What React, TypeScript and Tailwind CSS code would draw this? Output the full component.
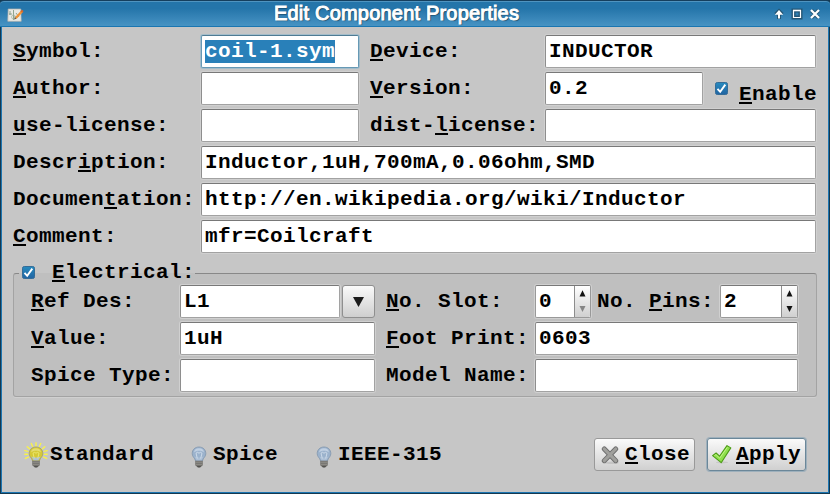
import React from "react";

/* Label with one underlined accelerator letter, marked by a leading "&". */
function Mnemonic({ text }: { text: string }) {
  const i = text.indexOf("&");
  if (i < 0) return <>{text}</>;
  return (
    <>
      {text.slice(0, i)}
      <span className="underline decoration-2 underline-offset-[2px] [text-decoration-skip-ink:none]">{text[i + 1]}</span>
      {text.slice(i + 2)}
    </>
  );
}

function Label({ text, className = "" }: { text: string; className?: string }) {
  return (
    <label className={`flex h-[33px] shrink-0 items-center whitespace-pre ${className}`}>
      <span>
        <Mnemonic text={text} />
      </span>
    </label>
  );
}

function Field({ value = "", selected = false, className = "" }: { value?: string; selected?: boolean; className?: string }) {
  const frame = selected
    ? "border-[#6699b5] border-t-[#4f7b93] shadow-[0_0_0_1px_#a3bdcb]"
    : "border-[#a2a2a2] border-t-[#787878] border-l-[#8e8e8e] shadow-[0_0_0_1px_#d0d0d0]";
  return (
    <div className={`flex h-[33px] shrink-0 items-center rounded-[2px] border bg-white pl-[3px] ${frame} ${className}`}>
      {value && <span className={selected ? "flex h-[23px] items-center bg-[#2980b9] text-white" : ""}>{value}</span>}
    </div>
  );
}

function Check() {
  return (
    <svg viewBox="0 0 13 13" className="h-[13px] w-[13px] shrink-0">
      <defs>
        <linearGradient id="checkFill" x1="0" y1="0" x2="0" y2="1">
          <stop offset="0" stopColor="#278bbf" />
          <stop offset="1" stopColor="#2164a2" />
        </linearGradient>
      </defs>
      <rect x=".5" y=".5" width="12" height="12" rx="1.8" fill="url(#checkFill)" stroke="#346c97" />
      <path d="M2.5 6.8 5.2 9.8 10.3 2.6" fill="none" stroke="#fff" strokeWidth="1.9" />
    </svg>
  );
}

function Spin({ value, className, disabledDown = false }: { value: string; className: string; disabledDown?: boolean }) {
  return (
    <div className={`flex h-[33px] shrink-0 overflow-hidden rounded-[2px] border border-[#999] border-t-[#787878] bg-white shadow-[0_0_0_1px_#d0d0d0] ${className}`}>
      <span className="flex flex-1 items-center pl-[3px]">{value}</span>
      <span className="w-[16px] border-l border-[#8d8d8d] bg-linear-to-b from-white to-[#d0d0d0]">
        <svg viewBox="0 0 15 31" className="h-[31px] w-[15px]">
          <path d="M7.5 4.2 10.5 10.5h-6z" fill="#111" />
          <path d="M7.5 26 10.5 20h-6z" fill={disabledDown ? "#858585" : "#111"} />
        </svg>
      </span>
    </div>
  );
}

function Bulb({ lit = false }: { lit?: boolean }) {
  return (
    <svg viewBox="0 0 24 26" className="h-[26px] w-[24px] shrink-0">
      {lit && (
        <g stroke="#f8f348" strokeWidth="1.4" strokeLinecap="round">
          <path d="M12 .7v3M7.3 1.5l1.2 2.8M16.7 1.5l-1.2 2.8M3.2 4.7l2.3 2M20.8 4.7l-2.3 2M.8 8.6l3 .8M23.2 8.6l-3 .8M.8 12.3h3M23.2 12.3h-3M1.4 16.4l3-1.3M22.6 16.4l-3-1.3" />
        </g>
      )}
      <path d="M12 5c-4 0-6.8 2.8-6.8 6.5 0 2.7 1.6 3.8 2.5 5.3.5.9.6 1.7.9 2.2h6.8c.3-.5.4-1.3.9-2.2.9-1.5 2.5-2.6 2.5-5.3C18.8 7.8 16 5 12 5Z" fill={lit ? "#d6c935" : "#9bb2cc"} stroke={lit ? "#a0a06a" : "#8095ad"} strokeWidth=".8" />
      <path d="M7.4 14.6c1 2 1.7 2.2 2 4h5.2c.3-1.8 1-2 2-4-2.5 1.3-6.7 1.3-9.2 0Z" fill="#adc0d6" />
      <path d="M7 10.5C7.4 7.6 9 6.3 12 6.3s4.6 1.3 5 4.2c-2-2.2-8-2.2-10 0Z" fill={lit ? "#e4dc70" : "#c0d0e2"} />
      <path d="M10.3 16.5 9 11.2q1.5-1.8 3 0 1.5-1.8 3 0l-1.3 5.3" fill="none" stroke={lit ? "#f0ef7c" : "#d9e4f0"} strokeWidth=".8" />
      <path d="M8.2 18.8h7.6v4.4L13.8 25h-3.6l-2-1.8Z" fill="#73726e" />
      <path d="M8.6 20.2h6.8M8.6 22.3h6.8" stroke="#a09f9a" strokeWidth=".7" />
      <path d="M10 24.3h4l-.8 1.2h-2.4Z" fill="#494946" />
    </svg>
  );
}

function TitleBar() {
  return (
    <header className="flex h-[27px] items-center rounded-t-[4px] border-t border-b border-t-[#153f5e] border-b-[#1a76b1] bg-linear-to-b from-[#2475aa] from-30% to-[#4793c3] shadow-[inset_0_1px_0_#4f94c0]">
      <svg viewBox="0 0 17 15" className="ml-[7px] mt-[3px] h-[15px] w-[17px] shrink-0">
        <path d="M1.2 1h12.6l.4 12.3H.8z" fill="#e9e9e4" stroke="#b8b5ad" strokeWidth=".7" />
        <path d="M6.5 2v10M2 6h3M7 9h4M3 3v4M9 5l3 4" stroke="#789378" strokeWidth=".8" fill="none" />
        <circle cx="6.5" cy="9" r="2" fill="none" stroke="#a5b5a1" strokeWidth=".7" />
        <path d="m8 9.2 6.2-6.7 1.8 1.4-6.4 6.8Z" fill="#f29334" />
        <path d="m13.4 3.4 1.4-1.6 1.8 1.2-1.4 1.7Z" fill="#d8672c" />
        <path d="m8 9.2-1 2.4 2.6-.9Z" fill="#705b3e" />
      </svg>
      <h1 className="flex-1 pb-px pl-[250px] font-['Liberation_Sans',sans-serif] text-[20px] font-normal leading-[24px] text-white [-webkit-text-stroke:1px_white] [text-shadow:1px_1px_1px_#123d59,-1px_0_1px_#245b7d]">
        <span className="whitespace-nowrap tracking-[0.2px]">Edit Component Properties</span>
      </h1>
      <svg viewBox="0 0 50 14" className="mr-[8px] h-[14px] w-[50px] shrink-0" fill="none">
        <g stroke="#245675" strokeWidth="4">
          <path d="M7 12V5M3.8 7.5 7 4.3l3.2 3.2M21.5 3.5h7v7h-7zM39.5 3.5l7 7M46.5 3.5l-7 7" />
        </g>
        <path d="M7 11.5V5" stroke="#fff" strokeWidth="2" />
        <path d="M2.8 7.8 7 3l4.2 4.8Z" fill="#fff" />
        <path d="M21.5 3.5h7v7h-7z" stroke="#fff" strokeWidth="1.2" />
        <path d="M21 3.5h8" stroke="#fff" strokeWidth="1.6" />
        <path d="m39 3 8 8M47 3l-8 8" stroke="#fff" strokeWidth="2.2" />
      </svg>
    </header>
  );
}

export default function App() {
  return (
    <div className="h-[494px] w-[830px] overflow-hidden bg-[#15394f] font-['Liberation_Mono',monospace] text-[21px] font-bold leading-[24px] tracking-[0.398px] text-black">
      <div className="flex h-full flex-col">
        <TitleBar />
        <main className="mx-px mb-px flex flex-1 flex-col border-x border-b border-[#1c75b1] bg-[#c6c6c6] pl-[11px] pt-[8px]">
          <section className="flex flex-col gap-[4px]">
            <div className="flex">
              <Label text="&Symbol:" className="w-[188px]" />
              <Field value="coil-1.sym" selected className="w-[158px]" />
              <Label text="&Device:" className="ml-[11px] w-[175px]" />
              <Field value="INDUCTOR" className="w-[271px]" />
            </div>
            <div className="flex">
              <Label text="&Author:" className="w-[188px]" />
              <Field className="w-[158px]" />
              <Label text="&Version:" className="ml-[11px] w-[175px]" />
              <Field value="0.2" className="w-[158px]" />
              <div className="ml-[12px] flex h-[33px] items-center gap-[11px]">
                <Check />
                <Label text="&Enable" className="pt-[12px]" />
              </div>
            </div>
            <div className="flex">
              <Label text="&use-license:" className="w-[188px]" />
              <Field className="w-[158px]" />
              <Label text="dist-&license:" className="ml-[11px] w-[175px]" />
              <Field className="w-[271px]" />
            </div>
            <div className="flex">
              <Label text="Descr&iption:" className="w-[188px]" />
              <Field value="Inductor,1uH,700mA,0.06ohm,SMD" className="w-[615px]" />
            </div>
            <div className="flex">
              <Label text="Documen&tation:" className="w-[188px]" />
              <Field value="http://en.wikipedia.org/wiki/Inductor" className="w-[615px]" />
            </div>
            <div className="flex">
              <Label text="&Comment:" className="w-[188px]" />
              <Field value="mfr=Coilcraft" className="w-[615px]" />
            </div>
          </section>

          <section className="mt-[20px] h-[124px] w-[804px] rounded-[3px] border border-[#a3a3a3] border-t-[#888] bg-[#bfbfbf] pl-[17px] shadow-[0_1px_0_#d0d0d0]">
            <div className="-ml-[12px] -mt-[13px] flex h-[24px] w-[176px] items-center gap-[17px] bg-linear-to-b from-[#c6c6c6] from-50% to-[#bfbfbf] to-50% pl-[3px]">
              <span className="pb-[2px]">
                <Check />
              </span>
              <span className="whitespace-nowrap">
                <Mnemonic text="&Electrical:" />
              </span>
            </div>
            <div className="flex flex-col gap-[4px]">
              <div className="flex">
                <Label text="&Ref Des:" className="w-[149px]" />
                <Field value="L1" className="w-[160px]" />
                <button className="ml-[2px] flex h-[33px] w-[33px] items-center justify-center rounded-[3px] border border-[#8f8f8f] bg-linear-to-b from-[#fafafa] to-[#cfcfcf]">
                  <svg viewBox="0 0 11 10" className="h-[10px] w-[11px]">
                    <path d="M0 0h11L5.5 10Z" fill="#1b1b1b" />
                  </svg>
                </button>
                <Label text="&No. Slot:" className="ml-[11px] w-[149px]" />
                <Spin value="0" disabledDown className="w-[56px]" />
                <Label text="No. &Pins:" className="ml-[6px] w-[123px]" />
                <Spin value="2" className="w-[78px]" />
              </div>
              <div className="flex">
                <Label text="&Value:" className="w-[149px]" />
                <Field value="1uH" className="w-[195px]" />
                <Label text="&Foot Print:" className="ml-[11px] w-[149px]" />
                <Field value="0603" className="w-[263px]" />
              </div>
              <div className="flex">
                <Label text="Spice Type:" className="w-[149px]" />
                <Field className="w-[195px]" />
                <Label text="Model Name:" className="ml-[11px] w-[149px]" />
                <Field className="w-[263px]" />
              </div>
            </div>
          </section>

          <footer className="mt-[41px] flex h-[33px] items-center">
            <div className="ml-[11px] flex w-[163px] items-center gap-[2px]">
              <Bulb lit />
              <span>Standard</span>
            </div>
            <div className="flex w-[125px] items-center gap-[2px]">
              <Bulb />
              <span>Spice</span>
            </div>
            <div className="flex w-[282px] items-center gap-[2px]">
              <Bulb />
              <span>IEEE-315</span>
            </div>
            <button className="flex h-[33px] w-[101px] items-center rounded-[3px] border border-[#999] bg-linear-to-b from-[#fafafa] to-[#d0d0d0] pl-[6px]">
              <svg viewBox="0 0 20 20" className="mr-[4px] h-[20px] w-[20px] shrink-0">
                <ellipse cx="11" cy="17.8" rx="7" ry="1.3" fill="#c4c4c4" />
                <path d="M3.3 4 14.7 15.7M14.7 4 3.3 15.7" stroke="#6e6e6e" strokeWidth="5" strokeLinecap="round" />
                <path d="M3.3 4 14.7 15.7M14.7 4 3.3 15.7" stroke="#a0a09d" strokeWidth="3.2" strokeLinecap="round" />
              </svg>
              <span><Mnemonic text="&Close" /></span>
            </button>
            <button className="ml-[12px] flex h-[33px] w-[99px] items-center rounded-[3px] border border-[#6b8799] bg-linear-to-b from-[#fafafa] to-[#d0d0d0] pl-[4px] shadow-[0_0_0_1px_#9eb0bc]">
              <svg viewBox="0 0 20 20" className="mr-[4px] h-[20px] w-[20px] shrink-0">
                <ellipse cx="10" cy="17.4" rx="6" ry="1" fill="#c8c8c8" />
                <path d="m.6 10.6 3.5-2.6 3.4 3.2L15 .6l3.8 2.3L9.2 17.7Z" fill="#8ee04c" stroke="#4c9b17" strokeWidth="1.1" strokeLinejoin="round" />
                <path d="m2.4 10.7 1.5-1.1 3.8 3.6 7.7-11" fill="none" stroke="#c2f586" strokeWidth="1" />
              </svg>
              <span><Mnemonic text="&Apply" /></span>
            </button>
          </footer>
        </main>
      </div>
    </div>
  );
}
